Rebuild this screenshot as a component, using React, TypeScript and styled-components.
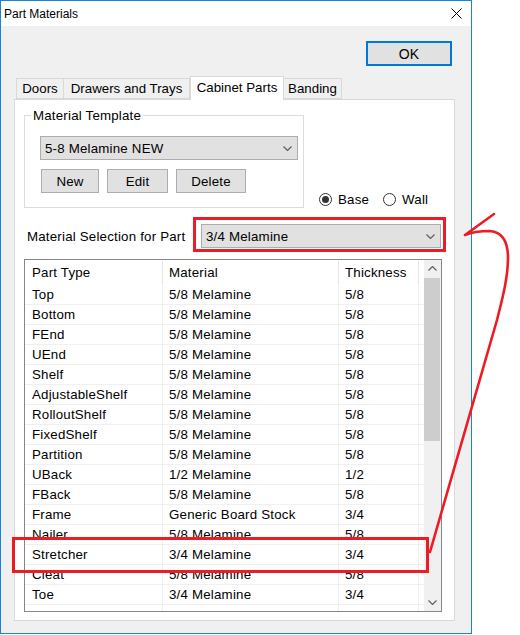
import styled, { createGlobalStyle } from 'styled-components';

const GlobalStyle = createGlobalStyle`
  html, body {
    margin: 0;
    padding: 0;
    background: #ffffff;
  }
  body {
    font-family: 'Liberation Sans', Arial, sans-serif;
    font-size: 13.3px;
    letter-spacing: 0.2px;
    color: #000000;
  }
  * {
    box-sizing: border-box;
  }
`;

type Part = { name: string; material: string; thickness: string };

const parts: Part[] = [
  { name: 'Top', material: '5/8 Melamine', thickness: '5/8' },
  { name: 'Bottom', material: '5/8 Melamine', thickness: '5/8' },
  { name: 'FEnd', material: '5/8 Melamine', thickness: '5/8' },
  { name: 'UEnd', material: '5/8 Melamine', thickness: '5/8' },
  { name: 'Shelf', material: '5/8 Melamine', thickness: '5/8' },
  { name: 'AdjustableShelf', material: '5/8 Melamine', thickness: '5/8' },
  { name: 'RolloutShelf', material: '5/8 Melamine', thickness: '5/8' },
  { name: 'FixedShelf', material: '5/8 Melamine', thickness: '5/8' },
  { name: 'Partition', material: '5/8 Melamine', thickness: '5/8' },
  { name: 'UBack', material: '1/2 Melamine', thickness: '1/2' },
  { name: 'FBack', material: '5/8 Melamine', thickness: '5/8' },
  { name: 'Frame', material: 'Generic Board Stock', thickness: '3/4' },
  { name: 'Nailer', material: '5/8 Melamine', thickness: '5/8' },
  { name: 'Stretcher', material: '3/4 Melamine', thickness: '3/4' },
  { name: 'Cleat', material: '5/8 Melamine', thickness: '5/8' },
  { name: 'Toe', material: '3/4 Melamine', thickness: '3/4' },
  { name: '', material: '', thickness: '' },
];

const tabs = [
  { label: 'Doors', width: 48 },
  { label: 'Drawers and Trays', width: 126 },
  { label: 'Cabinet Parts', width: 94 },
  { label: 'Banding', width: 58 },
];

const columns = [138, 176, 80];

const Chevron = ({ up = false }: { up?: boolean }) => (
  <svg width="9" height="5" viewBox="0 0 9 5">
    <polyline
      points={up ? '0.5,4.5 4.5,0.5 8.5,4.5' : '0.5,0.5 4.5,4.5 8.5,0.5'}
      fill="none"
      stroke="#606060"
      strokeWidth="1.2"
    />
  </svg>
);

export default function App() {
  return (
    <Page>
      <GlobalStyle />
      <Window>
        <TitleBar>
          <span>Part Materials</span>
          <svg width="11" height="11" viewBox="0 0 11 11">
            <path d="M0.5 0.5 L10.5 10.5 M10.5 0.5 L0.5 10.5" stroke="#000" strokeWidth="1" />
          </svg>
        </TitleBar>

        <Body>
          <OkRow>
            <OkButton>OK</OkButton>
          </OkRow>

          <TabStrip>
            {tabs.map((tab) => (
              <Tab key={tab.label} $width={tab.width} $active={tab.label === 'Cabinet Parts'}>
                {tab.label}
              </Tab>
            ))}
          </TabStrip>

          <TabPanel>
            <TemplateRow>
              <GroupBox>
                <Legend>Material Template</Legend>
                <GroupContent>
                  <Combo $width={258}>
                    <span>5-8 Melamine NEW</span>
                    <Chevron />
                  </Combo>
                  <ButtonRow>
                    <Button $width={58}>New</Button>
                    <Button $width={61}>Edit</Button>
                    <Button $width={70}>Delete</Button>
                  </ButtonRow>
                </GroupContent>
              </GroupBox>

              <RadioRow>
                <RadioItem>
                  <RadioCircle $checked />
                  Base
                </RadioItem>
                <RadioItem>
                  <RadioCircle $checked={false} />
                  Wall
                </RadioItem>
              </RadioRow>
            </TemplateRow>

            <SelectionRow>
              <span>Material Selection for Part</span>
              <Combo $width={240}>
                <span>3/4 Melamine</span>
                <Chevron />
              </Combo>
            </SelectionRow>

            <ListView>
              <Grid>
                <HeaderRow>
                  {['Part Type', 'Material', 'Thickness'].map((h, i) => (
                    <HeaderCell key={h} $width={columns[i]}>
                      {h}
                    </HeaderCell>
                  ))}
                </HeaderRow>
                {parts.map((p, idx) => (
                  <Row key={`row-${idx}`}>
                    <Cell $width={columns[0]} $pad={7}>{p.name}</Cell>
                    <Cell $width={columns[1]} $pad={6}>{p.material}</Cell>
                    <Cell $width={columns[2]} $pad={6}>{p.thickness}</Cell>
                  </Row>
                ))}
              </Grid>
              <ScrollBar>
                <ScrollArrow>
                  <Chevron up />
                </ScrollArrow>
                <Thumb />
                <ScrollTrack />
                <ScrollArrow>
                  <Chevron />
                </ScrollArrow>
              </ScrollBar>
            </ListView>
          </TabPanel>
        </Body>
      </Window>

      <Annotations width="520" height="635" viewBox="0 0 520 635">
        <rect x="194.5" y="218.5" width="250" height="32" fill="none" stroke="#ed1c24" strokeWidth="3" />
        <rect x="13.5" y="538.5" width="414" height="33" fill="none" stroke="#ed1c24" strokeWidth="3" />
        <path
          d="M430 552 L497 320 C502 300 508 278 508 258 C508 241 502 232 490 231 C480 231 472 232 465 235 M465 235 L494 214"
          fill="none"
          stroke="#ed1c24"
          strokeWidth="2.6"
          strokeLinecap="round"
          strokeLinejoin="round"
        />
      </Annotations>
    </Page>
  );
}

const Page = styled.div`
  position: relative;
  width: 520px;
  height: 635px;
  overflow: hidden;
  background: #ffffff;
`;

const Window = styled.div`
  width: 472px;
  height: 634px;
  border: 1px solid #1883d7;
  background: #f0f0f0;
  display: flex;
  flex-direction: column;
`;

const TitleBar = styled.div`
  height: 25px;
  flex-shrink: 0;
  background: #ffffff;
  display: flex;
  align-items: center;
  justify-content: space-between;
  padding: 0 9px 0 3px;
  font-size: 12px;
  letter-spacing: 0;
`;

const Body = styled.div`
  display: flex;
  flex-direction: column;
  padding: 15px 16px 0 13px;
`;

const OkRow = styled.div`
  display: flex;
  justify-content: flex-end;
  padding-right: 3px;
`;

const OkButton = styled.button`
  width: 86px;
  height: 25px;
  padding: 0;
  border: 2px solid #0078d7;
  background: #e1e1e1;
  font-family: inherit;
  font-size: 14px;
  letter-spacing: inherit;
  color: #000;
`;

const TabStrip = styled.div`
  display: flex;
  align-items: flex-end;
  height: 23px;
  margin-top: 10px;
  padding-left: 2px;
  position: relative;
  z-index: 1;
`;

const Tab = styled.div<{ $width: number; $active: boolean }>`
  width: ${({ $width }) => $width}px;
  height: ${({ $active }) => ($active ? '24px' : '21px')};
  margin-bottom: ${({ $active }) => ($active ? '-1px' : '0')};
  display: flex;
  align-items: center;
  justify-content: center;
  padding-bottom: ${({ $active }) => ($active ? '2px' : '0')};
  border: 1px solid #d9d9d9;
  border-bottom: ${({ $active }) => ($active ? 'none' : '1px solid #d9d9d9')};
  border-left: ${({ $active }) => ($active ? '1px solid #d9d9d9' : 'none')};
  background: ${({ $active }) => ($active ? '#ffffff' : '#f0f0f0')};
  white-space: nowrap;
  letter-spacing: 0;

  &:first-child {
    border-left: 1px solid #d9d9d9;
  }
`;

const TabPanel = styled.div`
  height: 522px;
  background: #ffffff;
  border: 1px solid #d9d9d9;
  display: flex;
  flex-direction: column;
`;

const TemplateRow = styled.div`
  display: flex;
  align-items: flex-end;
  gap: 15px;
  padding-left: 9px;
  margin-top: 7px;
`;

const GroupBox = styled.fieldset`
  width: 280px;
  margin: 0;
  padding: 0 0 14px 6px;
  border: 1px solid #dcdcdc;
  min-inline-size: 0;
`;

const Legend = styled.legend`
  padding: 0 2px;
  line-height: 17px;
`;

const GroupContent = styled.div`
  display: flex;
  flex-direction: column;
  gap: 9px;
  padding: 12px 0 0 9px;
`;

const Combo = styled.div<{ $width: number }>`
  width: ${({ $width }) => $width}px;
  height: 24px;
  display: flex;
  align-items: center;
  justify-content: space-between;
  padding: 0 5px 0 4px;
  border: 1px solid #adadad;
  background: #e1e1e1;
`;

const ButtonRow = styled.div`
  display: flex;
  gap: 8px;
  padding-left: 1px;
`;

const Button = styled.button<{ $width: number }>`
  width: ${({ $width }) => $width}px;
  height: 24px;
  padding: 0;
  border: 1px solid #adadad;
  background: #e1e1e1;
  font-family: inherit;
  font-size: inherit;
  letter-spacing: inherit;
  color: #000;
`;

const RadioRow = styled.div`
  display: flex;
  gap: 14px;
  height: 16px;
  margin-bottom: 1px;
`;

const RadioItem = styled.label`
  display: flex;
  align-items: center;
  gap: 6px;
`;

const RadioCircle = styled.span<{ $checked: boolean }>`
  width: 13px;
  height: 13px;
  border-radius: 50%;
  border: 1px solid #333333;
  background: #ffffff;
  display: flex;
  align-items: center;
  justify-content: center;

  &::after {
    content: '';
    width: 7px;
    height: 7px;
    border-radius: 50%;
    background: ${({ $checked }) => ($checked ? '#333333' : 'transparent')};
  }
`;

const SelectionRow = styled.div`
  display: flex;
  align-items: center;
  justify-content: space-between;
  margin-top: 16px;
  padding: 0 13px 0 12px;
`;

const ListView = styled.div`
  width: 418px;
  height: 353px;
  margin: 11px 0 0 9px;
  border: 1px solid #828790;
  display: flex;
  overflow: hidden;
`;

const Grid = styled.div`
  flex: 1;
  display: flex;
  flex-direction: column;
  overflow: hidden;
`;

const HeaderRow = styled.div`
  display: flex;
  height: 25px;
  flex-shrink: 0;
`;

const HeaderCell = styled.div<{ $width: number }>`
  width: ${({ $width }) => $width}px;
  display: flex;
  align-items: center;
  padding-left: 6px;
  border-right: 1px solid #e5e5e5;
  margin: 1px 0 1px 0;

  &:first-child {
    padding-left: 7px;
  }
`;

const Row = styled.div`
  display: flex;
  height: 20px;
  flex-shrink: 0;
  border-bottom: 1px solid #f0f0f0;
`;

const Cell = styled.div<{ $width: number; $pad: number }>`
  width: ${({ $width }) => $width}px;
  display: flex;
  align-items: center;
  padding-left: ${({ $pad }) => $pad}px;
  border-right: 1px solid #f0f0f0;
  white-space: nowrap;
`;

const ScrollBar = styled.div`
  width: 17px;
  flex-shrink: 0;
  display: flex;
  flex-direction: column;
  background: #f0f0f0;
`;

const ScrollArrow = styled.div`
  height: 17px;
  flex-shrink: 0;
  display: flex;
  align-items: center;
  justify-content: center;
`;

const Thumb = styled.div`
  height: 163px;
  margin: 1px 1px 0 0;
  background: #cdcdcd;
`;

const ScrollTrack = styled.div`
  flex: 1;
`;

const Annotations = styled.svg`
  position: absolute;
  left: 0;
  top: 0;
  pointer-events: none;
`;
